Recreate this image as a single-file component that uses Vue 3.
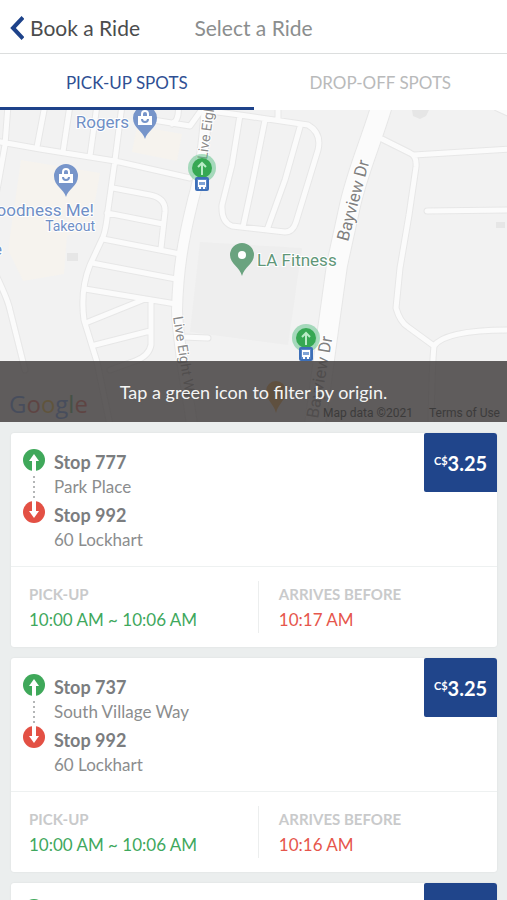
<template>
  <div class="page">
    <header class="header">
      <button class="back" type="button">
        <svg class="chevron" viewBox="0 0 14 24" aria-hidden="true">
          <path d="M13 1.5 3 12l10 10.500" />
        </svg>
        Book a Ride
      </button>
      <h1>Select a Ride</h1>
      <span></span>
    </header>

    <nav class="tabs">
      <button
        v-for="tab in tabs"
        :key="tab"
        type="button"
        :class="{ active: tab === activeTab }"
        @click="activeTab = tab"
      >{{ tab }}</button>
    </nav>

    <section class="map">
      <svg class="canvas" viewBox="0 110 507 312" preserveAspectRatio="xMidYMid slice">
        <rect class="land" x="-500" y="110" width="1600" height="312" />
        <path class="shop" d="M21 160 100 173 90 230 67 236 64 274 23 281 14 262 8 250Z" />
        <path class="shop" d="M137 126 182 134 177 161 132 152Z" />
        <path class="building" d="M200 242 302 248 288 345 190 332Z" />
        <path class="block" d="M67 253h11v8h-11zM496 222h9v6h-9zM412 110h17l-3 6-6 3-7-3z" />

        <path class="casing" :d="lanes" />
        <path class="casing street" :d="street" />
        <path class="casing avenue" :d="avenue" />
        <path class="lane" :d="lanes" />
        <path class="lane street" :d="street" />
        <path class="lane avenue" :d="avenue" />

        <text class="road" transform="translate(207 160) rotate(-82)">Live Eight</text>
        <text class="road" transform="translate(173 317) rotate(81)">Live Eight Wy</text>
        <text class="road big" transform="translate(348 242) rotate(-75)">Bayview Dr</text>
        <text class="road big" transform="translate(318 419) rotate(-80)">Bayview Dr</text>

        <text class="place" x="129" y="128" text-anchor="end">Rogers</text>
        <text class="place" x="94" y="216" text-anchor="end">Goodness Me!</text>
        <text class="place small" x="95" y="231" text-anchor="end">Takeout</text>
        <text class="place" x="2" y="255" text-anchor="end">e</text>
        <text class="place gym" x="257" y="266">LA Fitness</text>

        <g v-for="shop in shops" :key="shop.x" :transform="`translate(${shop.x} ${shop.y})`">
          <path class="pin" d="M0 20C-2 12-12 9-12-1A12 12 0 0 1 12-1C12 9 2 12 0 20Z" />
          <path class="bag" d="M-7-3H7V6H-7Z" />
          <path class="handle" d="M-3-3V-5A3 3 0 0 1 3-5V-3" />
          <path class="smile" d="M-3 0A3 3 0 0 0 3 0" />
        </g>

        <g transform="translate(242 255)">
          <path class="gym-pin" d="M0 21C-2 12-12 9-12 0A12 12 0 0 1 12 0C12 9 2 12 0 21Z" />
          <circle r="4" fill="#fff" />
        </g>
        <path class="food-pin" d="M276 413C274 404 266 400 266 391A10 10 0 0 1 286 391C286 400 278 404 276 413Z" />

        <g v-for="stop in stops" :key="stop.x" :transform="`translate(${stop.x} ${stop.y})`">
          <circle class="halo" r="14" />
          <circle class="dot" r="10" />
          <path class="arrow" d="M0 7V-4M-4-1 0-5 4-1" />
          <rect class="bus-sign" x="-6" y="10" width="12" height="12" rx="1" />
          <path class="bus" d="M-4 12H4V19H3V21H1V19H-1V21H-3V19H-4Z" />
          <path class="bus-window" d="M-3 14H3V17H-3Z" />
        </g>

        <text class="google" x="9" y="413"><tspan fill="#4285f4">G</tspan><tspan fill="#ea4335">o</tspan><tspan fill="#fbbc05">o</tspan><tspan fill="#4285f4">g</tspan><tspan fill="#34a853">l</tspan><tspan fill="#ea4335">e</tspan></text>
      </svg>
      <p class="hint">Tap a green icon to filter by origin.</p>
      <div class="legal">
        <span>Map data ©2021</span>
        <a href="#">Terms of Use</a>
      </div>
    </section>

    <main class="rides">
      <article v-for="(ride, i) in rides" :key="i" class="ride">
        <div class="route">
          <svg class="route-line" viewBox="0 0 22 76" aria-hidden="true">
            <circle cx="11" cy="11" r="11" fill="#3fa85a" />
            <path class="route-arrow" d="M11 22V9" />
            <path d="M11 5 16 12H6Z" fill="#fff" />
            <path class="dots" d="M11 27V52" />
            <circle cx="11" cy="63" r="11" fill="#e35044" />
            <path class="route-arrow" d="M11 52V65" />
            <path d="M11 69 6 62H16Z" fill="#fff" />
          </svg>
          <div class="places">
            <strong>{{ ride.from }}</strong>
            <span>{{ ride.fromPlace }}</span>
            <strong>{{ ride.to }}</strong>
            <span>{{ ride.toPlace }}</span>
          </div>
          <button class="price" type="button"><small>C$</small>{{ ride.price }}</button>
        </div>
        <div class="times">
          <div class="time">
            <h2>PICK-UP</h2>
            <p class="pickup">{{ ride.pickup }}</p>
          </div>
          <div class="time">
            <h2>ARRIVES BEFORE</h2>
            <p class="arrival">{{ ride.arrival }}</p>
          </div>
        </div>
      </article>
    </main>
  </div>
</template>

<script setup>
import { ref } from "vue"

const tabs = ['PICK-UP SPOTS', 'DROP-OFF SPOTS']
const activeTab = ref('PICK-UP SPOTS')

const rides = [
  { from: 'Stop 777', fromPlace: 'Park Place', to: 'Stop 992', toPlace: '60 Lockhart', price: '3.25', pickup: '10:00 AM ~ 10:06 AM', arrival: '10:17 AM' },
  { from: 'Stop 737', fromPlace: 'South Village Way', to: 'Stop 992', toPlace: '60 Lockhart', price: '3.25', pickup: '10:00 AM ~ 10:06 AM', arrival: '10:16 AM' },
  { from: 'Stop 777', fromPlace: 'Park Place', to: 'Stop 992', toPlace: '60 Lockhart', price: '3.25', pickup: '10:00 AM ~ 10:06 AM', arrival: '10:17 AM' }
]

const shops = [
  { x: 145, y: 119 },
  { x: 66, y: 177 }
]
const stops = [
  { x: 202, y: 168 },
  { x: 306, y: 338 }
]

const street = 'M207 105C204 150 199 180 193 200C183 240 178 270 177 310C178 345 186 380 192 425'
const avenue = 'M382 105C370 145 356 175 349 210L337 265L328 330L315 425'
const lanes = [
  'M-5 141 40 149 115 161 190 178',
  'M45 105 37 147M70 105 63 152M97 105 90 156M8 105 5 145-3 190',
  'M122 105 115 160 108 210Q106 230 103 237L90 265Q80 290 84 320L97 362 110 425',
  'M113 188 150 195Q166 198 165 212L161 248',
  'M107 213 163 224M103 239 180 254M92 263 176 279M85 289 176 304',
  'M88 322 145 299M95 345 150 331M151 302V345Q149 356 135 361L110 370',
  'M-4 275Q8 300 10 310L25 370',
  'M153 120 190 126 200 112M178 105Q180 120 172 124',
  'M210 111 240 115 308 125Q322 133 318 150L296 222Q293 232 285 232L232 226Q221 222 222 205L232 165 240 115',
  'M265 120 252 185 243 227M300 127 285 180 267 230M278 105V120',
  'M382 139 410 153Q417 156 416 167L409 215 400 268 396 308Q400 322 408 327L434 346Q432 365 431 425',
  'M414 155 510 149M434 346Q445 330 510 330M427 211 510 210M497 108 510 114',
  'M183 337 208 338'
].join('')
</script>

<style>
body {
  margin: 0;
  background: #ebeeee;
}
</style>

<style scoped>
.page {
  height: 100vh;
  display: flex;
  flex-direction: column;
  overflow: hidden;
  font-family: Lato, sans-serif;
  color: #858788;
}
button {
  border: 0;
  padding: 0;
  background: none;
  font: inherit;
  cursor: pointer;
}
h1,
h2,
p {
  margin: 0;
  font-weight: 400;
}
.header {
  flex: none;
  display: grid;
  grid-template-columns: 1fr auto 1fr;
  align-items: center;
  height: 53px;
  padding: 2px 10px 0;
  box-sizing: border-box;
  background: #fff;
}
.back {
  display: flex;
  align-items: center;
  gap: 6px;
  font-size: 21px;
  color: #4b4c4d;
}
.chevron {
  width: 14px;
  height: 24px;
}
.chevron path {
  fill: none;
  stroke: #1d428a;
  stroke-width: 4;
}
.header h1 {
  font-size: 21px;
  color: #8b8e8e;
}
.tabs {
  flex: none;
  display: flex;
  height: 57px;
  box-sizing: border-box;
  border-top: 1px solid #dcdede;
  background: #fff;
}
.tabs button {
  flex: 1;
  padding-top: 4px;
  border-bottom: 3px solid transparent;
  font-size: 17px;
  color: #b9babb;
}
.tabs .active {
  border-color: #1e428a;
  color: #2f4f93;
}
.map {
  flex: none;
  position: relative;
  height: 312px;
  overflow: hidden;
}
.canvas {
  display: block;
  width: 100%;
  height: 100%;
  font-family: Roboto, sans-serif;
}
.land {
  fill: #f2f2f2;
}
.shop {
  fill: #f6f3ee;
}
.building {
  fill: #eeeeee;
}
.block {
  fill: #e6e6e6;
}
.casing,
.lane {
  fill: none;
  stroke: #e7e7e7;
  stroke-width: 7;
  stroke-linejoin: round;
  stroke-linecap: round;
}
.lane {
  stroke: #fbfbfb;
  stroke-width: 5;
}
.casing.street {
  stroke-width: 12;
}
.lane.street {
  stroke-width: 10;
}
.casing.avenue {
  stroke-width: 22;
}
.lane.avenue {
  stroke-width: 20;
}
.road {
  font-size: 14px;
  fill: #8a8a8a;
  stroke: #fff;
  stroke-width: 2;
  paint-order: stroke;
}
.road.big {
  font-size: 17px;
  fill: #808080;
}
.place {
  font-size: 17px;
  fill: #6f8fc6;
  stroke: #fff;
  stroke-width: 2;
  paint-order: stroke;
}
.place.small {
  font-size: 14px;
}
.place.gym {
  fill: #5f9778;
}
.pin {
  fill: #7795ca;
}
.bag {
  fill: #fff;
}
.handle,
.smile {
  fill: none;
  stroke: #fff;
  stroke-width: 2;
}
.smile {
  stroke: #7795ca;
}
.gym-pin {
  fill: #6aa37f;
}
.food-pin {
  fill: #f29b1d;
}
.halo {
  fill: #57c083;
  fill-opacity: 0.5;
}
.dot {
  fill: #36a853;
}
.arrow {
  fill: none;
  stroke: #b9ecc6;
  stroke-width: 2;
}
.bus-sign {
  fill: #5a86c6;
  stroke: #3d6fb8;
  stroke-width: 2;
}
.bus {
  fill: #fff;
}
.bus-window {
  fill: #7fa3d6;
}
.google {
  font-family: "Open Sans", sans-serif;
  font-size: 24px;
  font-weight: 500;
}
.hint {
  position: absolute;
  right: 0;
  bottom: 0;
  left: 0;
  height: 61px;
  background: rgba(72, 69, 69, 0.87);
  font-size: 18px;
  line-height: 62px;
  text-align: center;
  color: #f4f4f4;
}
.legal {
  position: absolute;
  right: 7px;
  bottom: 1px;
  display: flex;
  gap: 16px;
  font: 12px/16px Roboto, sans-serif;
  color: #3c3b3b;
}
.legal a {
  color: inherit;
  text-decoration: none;
}
.rides {
  flex: 1;
  min-height: 0;
  padding: 11px 10px 0 11px;
  overflow-y: auto;
  scrollbar-width: none;
}
.ride {
  margin-bottom: 11px;
  border-radius: 3px;
  background: #fff;
  box-shadow: 0 0 2px rgba(0, 0, 0, 0.08);
}
.route {
  display: flex;
  align-items: flex-start;
  height: 133px;
  border-bottom: 1px solid #eef1f1;
}
.route-line {
  width: 22px;
  height: 76px;
  margin: 16px 9px 0 12px;
}
.route-arrow {
  stroke: #fff;
  stroke-width: 4;
}
.dots {
  stroke: #b4b6b7;
  stroke-width: 2;
  stroke-dasharray: 2 3;
}
.places {
  flex: 1;
  display: flex;
  flex-direction: column;
  padding-top: 17px;
  font-size: 17px;
}
.places strong {
  font-size: 18px;
  line-height: 25px;
  color: #7b7d7f;
}
.places span {
  margin-bottom: 5px;
  line-height: 23px;
  color: #8b8d8e;
}
.price {
  width: 73px;
  height: 59px;
  border-radius: 2px 3px 0 2px;
  background: #20458b;
  font-size: 20px;
  font-weight: 700;
  color: #fff;
}
.price small {
  font-size: 11px;
  vertical-align: 6px;
}
.times {
  display: flex;
  height: 80px;
  padding: 14px 0;
  box-sizing: border-box;
}
.time {
  flex: 1;
  padding-left: 20px;
}
.time:first-child {
  flex: 0 0 51%;
  box-sizing: border-box;
  padding-left: 18px;
  border-right: 1px solid #eceeee;
}
.time h2 {
  font-size: 15px;
  font-weight: 700;
  line-height: 26px;
  color: #c9cacb;
}
.time p {
  font-size: 17px;
  line-height: 25px;
}
.pickup {
  color: #3fa85d;
}
.arrival {
  color: #e6564c;
}
</style>
